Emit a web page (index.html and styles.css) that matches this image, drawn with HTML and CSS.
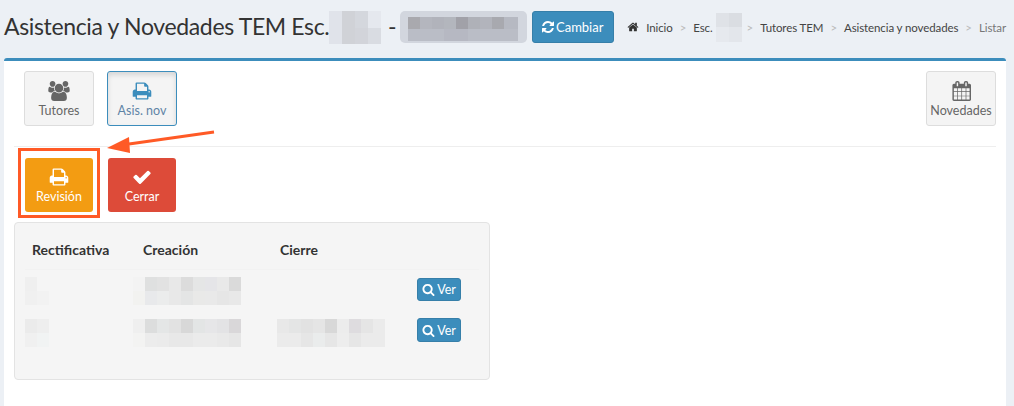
FILE: index.html
```html
<!DOCTYPE html>
<html lang="es">
<head>
    <meta charset="UTF-8">
    <title>Asistencia y Novedades TEM</title>
    <link rel="stylesheet" href="styles.css">
</head>
<body>
    <svg class="sprites" width="0" height="0">
        <symbol id="i-print" viewBox="0 0 1792 1792"><path d="M448 1536h896v-256h-896v256zm0-640h896v-384h-160q-40 0-68-28t-28-68v-160h-640v640zm1152 64q0-26-19-45t-45-19-45 19-19 45 19 45 45 19 45-19 19-45zm128 0v416q0 13-9.5 22.5t-22.5 9.5h-224v160q0 40-28 68t-68 28h-960q-40 0-68-28t-28-68v-160h-224q-13 0-22.5-9.5t-9.5-22.5v-416q0-79 56.5-135.5t135.5-56.5h64v-544q0-40 28-68t68-28h672q40 0 88 20t76 48l152 152q28 28 48 76t20 88v256h64q79 0 135.5 56.5t56.5 135.5z"/></symbol>
        <symbol id="i-users" viewBox="0 0 1920 1792"><path d="M593 896q-162 5-265 128h-134q-82 0-138-40.5t-56-118.5q0-353 124-353 6 0 43.5 21t97.5 42.5 119 21.5q67 0 133-23-5 37-5 66 0 139 81 256zm1071 637q0 120-73 189.5t-194 69.5h-874q-121 0-194-69.5t-73-189.5q0-53 3.5-103.5t14-109 26.5-108.5 43-97.5 62-81 85.5-53.5 111.5-20q10 0 43 21.5t73 48 107 48 135 21.5 135-21.5 107-48 73-48 43-21.5q61 0 111.5 20t85.5 53.5 62 81 43 97.5 26.5 108.5 14 109 3.5 103.5zm-1024-1277q0 106-75 181t-181 75-181-75-75-181 75-181 181-75 181 75 75 181zm704 384q0 159-112.5 271.5t-271.5 112.5-271.5-112.5-112.5-271.5 112.5-271.5 271.5-112.5 271.5 112.5 112.5 271.5zm576 225q0 78-56 118.5t-138 40.5h-134q-103-123-265-128 81-117 81-256 0-29-5-66 66 23 133 23 59 0 119-21.5t97.5-42.5 43.5-21q124 0 124 353zm-128-609q0 106-75 181t-181 75-181-75-75-181 75-181 181-75 181 75 75 181z"/></symbol>
        <symbol id="i-calendar" viewBox="0 0 1664 1792"><path d="M192 1664h288v-288h-288v288zm352 0h320v-288h-320v288zm-352-352h288v-320h-288v320zm352 0h320v-320h-320v320zm-352-384h288v-288h-288v288zm736 736h320v-288h-320v288zm-384-736h320v-288h-320v288zm768 736h288v-288h-288v288zm-384-352h320v-320h-320v320zm-352-864v-288q0-13-9.5-22.5t-22.5-9.5h-64q-13 0-22.5 9.5t-9.5 22.5v288q0 13 9.5 22.5t22.5 9.5h64q13 0 22.5-9.5t9.5-22.5zm736 864h288v-320h-288v320zm-384-384h320v-288h-320v288zm384 0h288v-288h-288v288zm32-480v-288q0-13-9.5-22.5t-22.5-9.5h-64q-13 0-22.5 9.5t-9.5 22.5v288q0 13 9.5 22.5t22.5 9.5h64q13 0 22.5-9.5t9.5-22.5zm384-64v1280q0 52-38 90t-90 38h-1408q-52 0-90-38t-38-90v-1280q0-52 38-90t90-38h128v-96q0-66 47-113t113-47h64q66 0 113 47t47 113v96h384v-96q0-66 47-113t113-47h64q66 0 113 47t47 113v96h128q52 0 90 38t38 90z"/></symbol>
        <symbol id="i-check" viewBox="0 0 1792 1792"><path d="M1671 566q0 40-28 68l-724 724-136 136q-28 28-68 28t-68-28l-136-136-362-362q-28-28-28-68t28-68l136-136q28-28 68-28t68 28l294 295 656-657q28-28 68-28t68 28l136 136q28 28 28 68z"/></symbol>
        <symbol id="i-search" viewBox="0 0 1792 1792"><path d="M1216 832q0-185-131.5-316.5t-316.5-131.5-316.5 131.5-131.5 316.5 131.5 316.5 316.5 131.5 316.5-131.5 131.5-316.5zm512 832q0 52-38 90t-90 38q-54 0-90-38l-343-342q-179 124-399 124-143 0-273.5-55.5t-225-150-150-225-55.5-273.5 55.5-273.5 150-225 225-150 273.5-55.5 273.5 55.5 225 150 150 225 55.5 273.5q0 220-124 399l343 343q37 37 37 90z"/></symbol>
        <symbol id="i-refresh" viewBox="0 0 1792 1792"><path d="M1639 1056q0 5-1 7-64 268-268 434.5t-478 166.5q-146 0-282.5-55t-243.5-157l-129 129q-19 19-45 19t-45-19-19-45v-448q0-26 19-45t45-19h448q26 0 45 19t19 45-19 45l-137 137q71 66 161 102t187 36q134 0 250-65t186-179q11-17 53-117 8-23 30-23h192q13 0 22.5 9.5t9.5 22.5zm25-800v448q0 26-19 45t-45 19h-448q-26 0-45-19t-19-45 19-45l138-138q-148-137-349-137-134 0-250 65t-186 179q-11 17-53 117-8 23-30 23h-199q-13 0-22.5-9.5t-9.5-22.5v-7q65-268 270-434.5t480-166.5q146 0 284 55.5t245 156.5l130-129q19-19 45-19t45 19 19 45z"/></symbol>
        <symbol id="i-home" viewBox="0 0 1792 1792"><path d="M1472 992v480q0 26-19 45t-45 19h-384v-384h-256v384h-384q-26 0-45-19t-19-45v-480q0-1 .5-3t.5-3l575-474 575 474q1 2 1 6zm223-69l-62 74q-8 9-21 11h-3q-13 0-21-7l-692-577-692 577q-12 8-24 7-13-2-21-11l-62-74q-8-10-7-23.5t11-21.5l719-599q32-26 76-26t76 26l244 204v-195q0-14 9-23t23-9h192q14 0 23 9t9 23v408l219 182q10 8 11 21.5t-7 23.5z"/></symbol>
    </svg>

    <header class="page-header">
        <h1>Asistencia y Novedades TEM Esc.</h1>
        <svg class="mosaic" width="52" height="33" shape-rendering="crispEdges">
            <rect width="13" height="33" fill="#e0e3ea"/>
            <rect x="13" width="13" height="33" fill="#d0d2d7"/>
            <rect x="26" width="13" height="17" fill="#d4d7dd"/>
            <rect x="26" y="17" width="13" height="16" fill="#d2d4da"/>
            <rect x="39" width="13" height="17" fill="#e5e8ee"/>
            <rect x="39" y="17" width="13" height="16" fill="#d9dce2"/>
        </svg>
        <span class="dash">-</span>
        <div class="school-pill">
            <svg class="mosaic" width="110" height="24" shape-rendering="crispEdges">
                <rect y="12" width="110" height="12" fill="#babdc6"/>
                <rect x="36" y="12" width="24" height="12" fill="#b6b8c2"/>
                <rect width="12" height="12" fill="#a9a9ae"/>
                <rect x="12" width="12" height="12" fill="#b4b6be"/>
                <rect x="24" width="12" height="12" fill="#b1b3bb"/>
                <rect x="36" width="12" height="12" fill="#b3b6bd"/>
                <rect x="48" width="12" height="12" fill="#a1a1a8"/>
                <rect x="60" width="12" height="12" fill="#afb1b8"/>
                <rect x="72" width="12" height="12" fill="#b2b4bc"/>
                <rect x="84" width="12" height="12" fill="#a8a9af"/>
                <rect x="96" width="14" height="12" fill="#b6b9c2"/>
            </svg>
        </div>
        <a class="btn-change"><svg class="icon"><use href="#i-refresh"/></svg>Cambiar</a>
        <ol class="breadcrumb">
            <li><svg class="icon home"><use href="#i-home"/></svg>Inicio</li>
            <li>Esc.<svg class="mosaic crumb-blur" width="26" height="29" shape-rendering="crispEdges">
                <rect width="13" height="14" fill="#dfe2e7"/>
                <rect x="13" width="13" height="14" fill="#dadde2"/>
                <rect y="14" width="13" height="15" fill="#e6e9ee"/>
                <rect x="13" y="14" width="13" height="15" fill="#e3e6eb"/>
            </svg></li>
            <li>Tutores TEM</li>
            <li>Asistencia y novedades</li>
            <li class="current">Listar</li>
        </ol>
    </header>

    <section class="box">
        <div class="toolbar">
            <a class="app-btn"><svg class="app-icon users"><use href="#i-users"/></svg>Tutores</a>
            <a class="app-btn selected"><svg class="app-icon"><use href="#i-print"/></svg>Asis. nov</a>
            <a class="app-btn push-right"><svg class="app-icon"><use href="#i-calendar"/></svg>Novedades</a>
        </div>
        <hr class="divider">
        <div class="actions">
            <a class="action-btn orange"><svg class="app-icon"><use href="#i-print"/></svg>Revisión</a>
            <a class="action-btn red"><svg class="app-icon"><use href="#i-check"/></svg>Cerrar</a>
        </div>

        <div class="well">
            <div class="row head">
                <span class="col-a">Rectificativa</span>
                <span class="col-b">Creación</span>
                <span class="col-c">Cierre</span>
            </div>
            <div class="row">
                <svg class="mosaic col-a" width="48" height="28" shape-rendering="crispEdges">
                    <rect width="12" height="14" fill="#efefef"/>
                    <rect y="14" width="12" height="14" fill="#f0f0f0"/>
                    <rect x="12" y="14" width="12" height="14" fill="#f2f2f2"/>
                </svg>
                <svg class="mosaic col-b" width="120" height="28" shape-rendering="crispEdges">
                    <rect width="12" height="14" fill="#f3f3f3"/>
                    <rect y="14" width="12" height="14" fill="#f2f2f0"/>
                    <rect x="12" width="12" height="14" fill="#dfe0e0"/>
                    <rect x="24" width="12" height="14" fill="#e2e2e2"/>
                    <rect x="36" width="12" height="14" fill="#e8e8e8"/>
                    <rect x="48" width="12" height="14" fill="#dcdcdc"/>
                    <rect x="60" width="12" height="14" fill="#e5e6e6"/>
                    <rect x="72" width="12" height="14" fill="#e5e5e8"/>
                    <rect x="84" width="12" height="14" fill="#e9e9e9"/>
                    <rect x="96" width="12" height="14" fill="#dadada"/>
                    <rect x="12" y="14" width="12" height="14" fill="#e8e9eb"/>
                    <rect x="24" y="14" width="12" height="14" fill="#ebecec"/>
                    <rect x="36" y="14" width="12" height="14" fill="#e8e8e8"/>
                    <rect x="48" y="14" width="12" height="14" fill="#e4e5e5"/>
                    <rect x="60" y="14" width="12" height="14" fill="#e9e9e8"/>
                    <rect x="72" y="14" width="12" height="14" fill="#e9e9e9"/>
                    <rect x="84" y="14" width="12" height="14" fill="#e6e6e6"/>
                    <rect x="96" y="14" width="12" height="14" fill="#e8e8e8"/>
                </svg>
                <span class="col-c"></span>
                <a class="btn-view"><svg class="icon"><use href="#i-search"/></svg>Ver</a>
            </div>
            <div class="row">
                <svg class="mosaic col-a" width="48" height="28" shape-rendering="crispEdges">
                    <rect width="12" height="14" fill="#ebebeb"/>
                    <rect x="12" width="12" height="14" fill="#eeeeee"/>
                    <rect y="14" width="12" height="14" fill="#f0f0f0"/>
                    <rect x="12" y="14" width="12" height="14" fill="#f1f3f3"/>
                </svg>
                <svg class="mosaic col-b" width="120" height="28" shape-rendering="crispEdges">
                    <rect width="12" height="14" fill="#efefef"/>
                    <rect y="14" width="12" height="14" fill="#f3f3f2"/>
                    <rect x="12" width="12" height="14" fill="#dcdddd"/>
                    <rect x="24" width="12" height="14" fill="#e4e6e6"/>
                    <rect x="36" width="12" height="14" fill="#e2e2e2"/>
                    <rect x="48" width="12" height="14" fill="#d8d8d8"/>
                    <rect x="60" width="12" height="14" fill="#e3e5e5"/>
                    <rect x="72" width="12" height="14" fill="#e6e6e8"/>
                    <rect x="84" width="12" height="14" fill="#e3e3e5"/>
                    <rect x="96" width="12" height="14" fill="#d9d7d9"/>
                    <rect x="12" y="14" width="12" height="14" fill="#ececec"/>
                    <rect x="24" y="14" width="12" height="14" fill="#ebebeb"/>
                    <rect x="36" y="14" width="12" height="14" fill="#e8e8e8"/>
                    <rect x="48" y="14" width="12" height="14" fill="#e8e8e8"/>
                    <rect x="60" y="14" width="12" height="14" fill="#ebebeb"/>
                    <rect x="72" y="14" width="12" height="14" fill="#ebebeb"/>
                    <rect x="84" y="14" width="12" height="14" fill="#e9e9e9"/>
                    <rect x="96" y="14" width="12" height="14" fill="#e6e6e6"/>
                </svg>
                <span class="col-c">
                    <svg class="mosaic" width="108" height="28" shape-rendering="crispEdges">
                        <rect width="12" height="14" fill="#e8e8e8"/>
                        <rect x="12" width="12" height="14" fill="#e4e5e5"/>
                        <rect x="24" width="12" height="14" fill="#e2e2e2"/>
                        <rect x="36" width="12" height="14" fill="#e5e5e5"/>
                        <rect x="48" width="12" height="14" fill="#d8d8d8"/>
                        <rect x="60" width="12" height="14" fill="#ececec"/>
                        <rect x="72" width="12" height="14" fill="#dedcdf"/>
                        <rect x="84" width="12" height="14" fill="#e5e5e5"/>
                        <rect x="96" width="12" height="14" fill="#ebebeb"/>
                        <rect y="14" width="12" height="14" fill="#ebebeb"/>
                        <rect x="12" y="14" width="12" height="14" fill="#ebebeb"/>
                        <rect x="24" y="14" width="12" height="14" fill="#e6e6e6"/>
                        <rect x="36" y="14" width="12" height="14" fill="#eaecec"/>
                        <rect x="48" y="14" width="12" height="14" fill="#e6e6e6"/>
                        <rect x="60" y="14" width="12" height="14" fill="#ededed"/>
                        <rect x="72" y="14" width="12" height="14" fill="#e6e6e6"/>
                        <rect x="84" y="14" width="12" height="14" fill="#ebebeb"/>
                        <rect x="96" y="14" width="12" height="14" fill="#ebebeb"/>
                    </svg>
                </span>
                <a class="btn-view"><svg class="icon"><use href="#i-search"/></svg>Ver</a>
            </div>
        </div>

        <!-- marcas de la captura -->
        <div class="mark-box"></div>
        <svg class="mark-arrow" width="112" height="26">
            <path d="M107 3 L22 15" stroke="#ff5a26" stroke-width="3" fill="none"/>
            <path d="M0 19 L22 8 L23 24 Z" fill="#ff5a26"/>
        </svg>
    </section>
</body>
</html>
```

FILE: styles.css
```css
* {
    box-sizing: border-box;
}
html, body {
    height: 100%;
}
body {
    margin: 0;
    background-color: #ecf0f5;
    font-family: "Lato", "Noto Sans", sans-serif;
    font-size: 14px;
    color: #333;
    overflow: hidden;
}
.sprites {
    position: absolute;
}
.icon {
    width: 14px;
    height: 14px;
    fill: currentColor;
    flex: none;
}
.mosaic {
    display: block;
    flex: none;
}

/* cabecera */
.page-header {
    display: flex;
    align-items: center;
    height: 58px;
    padding: 0 0 4px 4px;
}
.page-header h1 {
    flex: none;
    width: 325px;
    margin: 0 0 3px;
    font-size: 23px;
    font-weight: 400;
    letter-spacing: -0.35px;
    color: #333;
    white-space: nowrap;
}
.dash {
    flex: none;
    width: 19px;
    padding-left: 7px;
    margin-bottom: 3px;
    font-size: 23px;
    color: #333;
}
.school-pill {
    flex: none;
    width: 127px;
    height: 32px;
    padding: 6px 0 0 8px;
    background-color: #d2d6de;
    border-radius: 5px;
}
.btn-change {
    display: flex;
    flex: none;
    align-items: center;
    gap: 1px;
    width: 82px;
    height: 32px;
    margin-left: 5px;
    padding-left: 8px;
    background-color: #3c8dbc;
    border: 1px solid #367fa9;
    border-radius: 3px;
    color: #fff;
    font-size: 13px;
}
.breadcrumb {
    display: flex;
    flex: none;
    align-items: center;
    list-style: none;
    margin: 0 0 0 auto;
    padding: 0 8px 0 0;
    font-size: 11.5px;
    letter-spacing: -0.1px;
    color: #444;
    white-space: nowrap;
}
.breadcrumb li {
    display: flex;
    align-items: center;
}
.breadcrumb li + li::before {
    content: ">";
    margin: 0 7px;
    color: #bbb;
}
.breadcrumb .current {
    color: #777;
}
.home {
    width: 12px;
    height: 12px;
    margin-right: 7px;
    color: #333;
}
.crumb-blur {
    margin: 0 -2px 0 3px;
}

/* caja */
.box {
    position: relative;
    height: 348px;
    margin: 0 8px 0 4px;
    background-color: #fff;
    border-top: 3px solid #3c8dbc;
    border-radius: 3px 3px 0 0;
}
.toolbar {
    display: flex;
    gap: 13px;
    padding: 10px 10px 0 20px;
}
.app-btn {
    display: flex;
    flex-direction: column;
    align-items: center;
    width: 70px;
    height: 55px;
    padding-top: 9px;
    background-color: #f4f4f4;
    border: 1px solid #ddd;
    border-radius: 3px;
    color: #666;
    font-size: 12.5px;
}
.app-icon {
    width: 20px;
    height: 20px;
    margin-bottom: 2px;
    fill: currentColor;
}
.app-icon.users {
    width: 22px;
}
.selected {
    border-color: #3c8dbc;
    box-shadow: inset 0 3px 5px rgba(0, 0, 0, .125);
    color: #5f84a6;
}
.selected .app-icon {
    fill: #3c8dbc;
}
.push-right {
    margin-left: auto;
}
.divider {
    height: 1px;
    margin: 20px 10px 0;
    border: 0;
    background-color: #eee;
}
.actions {
    display: flex;
    gap: 15px;
    padding: 11px 0 0 21px;
}
.action-btn {
    display: flex;
    flex-direction: column;
    align-items: center;
    width: 68px;
    height: 54px;
    padding-top: 9px;
    border-radius: 3px;
    color: #fff;
    font-size: 12.5px;
}
.orange {
    background-color: #f39c12;
}
.red {
    background-color: #dd4b39;
}
.well {
    width: 476px;
    height: 158px;
    margin: 10px 0 0 10px;
    padding: 17px 10px 0;
    background-color: #f5f5f5;
    border: 1px solid #e3e3e3;
    border-radius: 4px;
}
.row {
    display: flex;
    align-items: flex-start;
    height: 42px;
}
.row.head {
    height: 30px;
    margin-bottom: 7px;
    padding-top: 1px;
    font-weight: 700;
    font-size: 14px;
    border-bottom: 1px solid #f2f2f2;
}
.col-a {
    width: 108px;
}
.col-b {
    width: 144px;
}
.col-c {
    width: 140px;
}
.head .col-a {
    padding-left: 7px;
    width: 118px;
}
.head .col-b {
    width: 137px;
}
.btn-view {
    display: flex;
    align-items: center;
    justify-content: center;
    gap: 2px;
    width: 44px;
    height: 23px;
    margin-top: 1px;
    background-color: #3c8dbc;
    border: 1px solid #367fa9;
    border-radius: 3px;
    color: #fff;
    font-size: 12.5px;
}
.row + .row + .row .btn-view {
    height: 24px;
    margin-top: -1px;
}
.btn-view .icon {
    width: 13px;
    height: 13px;
}

/* anotaciones sobre la captura */
.mark-box {
    position: absolute;
    left: 14px;
    top: 87px;
    width: 82px;
    height: 70px;
    border: 3px solid #ff5a26;
}
.mark-arrow {
    position: absolute;
    left: 103px;
    top: 68px;
}
```
